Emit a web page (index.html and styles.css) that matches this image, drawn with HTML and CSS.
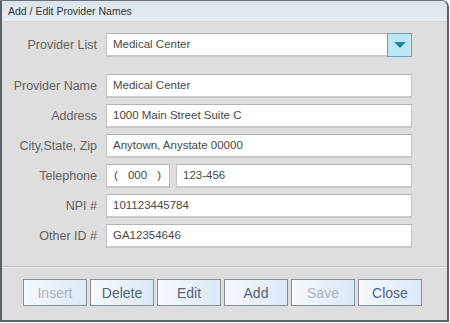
FILE: index.html
```html
<!DOCTYPE html>
<html lang="en">
<head>
  <meta charset="UTF-8" />
  <title>Add / Edit Provider Names</title>
  <link rel="stylesheet" href="styles.css">
</head>
<body>
  <div class="window">
    <div class="titlebar">Add / Edit Provider Names</div>

    <div class="content">
      <div class="row top">
        <label>Provider List</label>
        <div class="combo">
          <div class="field combo-text">Medical Center</div>
          <button class="drop"><span class="arrow"></span></button>
        </div>
      </div>

      <div class="rows">
        <div class="row">
          <label>Provider Name</label>
          <div class="field">Medical Center</div>
        </div>
        <div class="row">
          <label>Address</label>
          <div class="field">1000 Main Street Suite C</div>
        </div>
        <div class="row">
          <label>City,State, Zip</label>
          <div class="field">Anytown, Anystate 00000</div>
        </div>
        <div class="row">
          <label>Telephone</label>
          <div class="phone">
            <div class="field area"><span>(</span><span>000</span><span>)</span></div>
            <div class="field">123-456</div>
          </div>
        </div>
        <div class="row">
          <label>NPI #</label>
          <div class="field">101123445784</div>
        </div>
        <div class="row">
          <label>Other ID #</label>
          <div class="field">GA12354646</div>
        </div>
      </div>
    </div>

    <div class="buttons">
      <button class="btn" disabled>Insert</button>
      <button class="btn">Delete</button>
      <button class="btn">Edit</button>
      <button class="btn">Add</button>
      <button class="btn" disabled>Save</button>
      <button class="btn">Close</button>
    </div>
  </div>
</body>
</html>
```

FILE: styles.css
```css
* {
  margin: 0;
  padding: 0;
  box-sizing: border-box;
}

body {
  background: #fff;
  font-family: "Liberation Sans", Arial, sans-serif;
}

.window {
  width: 449px;
  height: 322px;
  border: 2px solid #5a6069;
  border-top: 1px solid #6a7079;
  border-top-right-radius: 7px;
  background: #dedede;
  display: flex;
  flex-direction: column;
  overflow: hidden;
}

.titlebar {
  height: 21px;
  padding-left: 6px;
  line-height: 21px;
  font-size: 10.5px;
  color: #2e3338;
  background: linear-gradient(to bottom, #dce3eb, #e8edf2);
  border-bottom: 1px solid #d2d8de;
}

.content {
  padding-top: 11px;
}

.row {
  display: grid;
  grid-template-columns: 95px 306px;
  column-gap: 9px;
  align-items: center;
  height: 24px;
}

.rows {
  display: flex;
  flex-direction: column;
  gap: 6px;
  margin-top: 17px;
}

label {
  text-align: right;
  font-size: 12.5px;
  color: #626262;
}

.field {
  height: 24px;
  background: #fff;
  border: 1px solid #c2c2c2;
  border-top-color: #b4b4b4;
  border-bottom: 2px solid #c8c8c8;
  padding-left: 6px;
  font-size: 11.5px;
  line-height: 21px;
  color: #474747;
  white-space: nowrap;
}

.combo {
  display: flex;
  height: 24px;
}

.combo-text {
  flex: 1;
  border-right: none;
}

.drop {
  width: 25px;
  height: 24px;
  background: #bfe7f6;
  border: 1px solid #6aa3b2;
  display: flex;
  align-items: center;
  justify-content: center;
}

.arrow {
  width: 0;
  height: 0;
  border-left: 6px solid transparent;
  border-right: 6px solid transparent;
  border-top: 6px solid #17899b;
}

.phone {
  display: flex;
  gap: 6px;
}

.phone .field {
  flex: 1;
}

.phone .area {
  flex: 0 0 64px;
  display: flex;
  justify-content: space-between;
  padding: 0 8px 0 7px;
}

.buttons {
  margin-top: 18px;
  border-top: 1px solid #c4c4c4;
  box-shadow: inset 0 1px 0 #ececec;
  padding: 12px 0 0 21px;
  display: flex;
  gap: 3px;
}

.btn {
  width: 64px;
  height: 27px;
  border: 1px solid #8c8f93;
  background: linear-gradient(to right, #f6f9fd, #dbe8f7);
  font-family: "Liberation Sans", Arial, sans-serif;
  font-size: 14px;
  color: #53637a;
}

.btn:disabled {
  color: #adb2b9;
}
```
